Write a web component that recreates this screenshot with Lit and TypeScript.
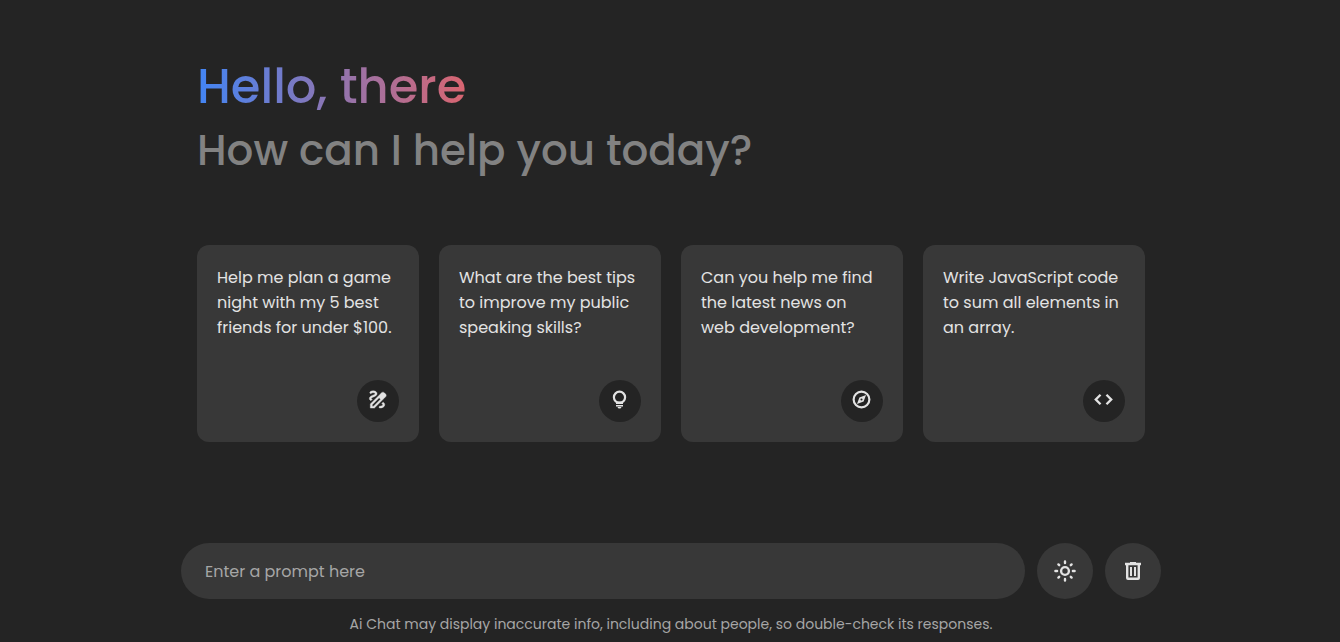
import { LitElement, html, css, svg } from "lit";
import { customElement } from "lit/decorators.js";

const icons = {
  draw: svg`<path transform="translate(-.6 -1.3) scale(1.1)" fill="currentColor" stroke="currentColor" stroke-width=".4" fill-rule="evenodd" d="M18.85 10.39l1.06-1.06c.78-.78.78-2.05 0-2.83L18.5 5.09c-.78-.78-2.05-.78-2.83 0l-2.48 2.470L4 16.76V21h4.24zM13.2 10.4L6 17.6V19h1.4l7.2-7.2zM19 17.5c0 2.19-2.54 3.5-5 3.5-.55 0-1-.45-1-1s.45-1 1-1c1.54 0 3-.73 3-1.5 0-.47-.48-.87-1.23-1.2l1.48-1.48c1.07.63 1.75 1.47 1.75 2.68zM4.58 13.35C3.61 12.79 3 12.06 3 11c0-1.8 1.89-2.63 3.56-3.36C7.59 7.18 9 6.56 9 6c0-.41-.78-1-2-1-1.26 0-1.8.61-1.83.64-.35.41-.98.46-1.4.12-.41-.34-.49-.95-.15-1.38C3.73 4.24 4.76 3 7 3s4 1.32 4 3c0 1.87-1.93 2.72-3.64 3.47C6.42 9.88 5 10.5 5 11c0 .31.43.6 1.07.86l-1.49 1.49z"/>`,
  bulb: svg`<circle cx="12" cy="9.5" r="6.4" fill="none" stroke="currentColor" stroke-width="2.5"/><path fill="currentColor" d="M8 14.4h8V17H8zM8 18.2h8v1.8H8zM9.8 20.6h4.4a2.2 1.8 0 0 1-4.4 0z"/>`,
  compass: svg`<circle cx="12" cy="12" r="9" fill="none" stroke="currentColor" stroke-width="2.5"/><path fill="currentColor" fill-rule="evenodd" d="M6.8 17.2l2.8-7.6 7.6-2.8-2.8 7.6zM12 10.8a1.2 1.2 0 1 0 0 2.4 1.2 1.2 0 0 0 0-2.4z"/>`,
  code: svg`<path fill="none" stroke="currentColor" stroke-width="2.7" d="M8.6 6.6L3.2 12l5.4 5.4M15.4 6.6l5.4 5.4-5.4 5.4"/>`,
  sun: svg`<g fill="none" stroke="currentColor" stroke-width="2.4" stroke-linecap="round"><circle cx="12" cy="12" r="3.9"/><path d="M12 2.4v1.7M12 19.9v1.7M2.4 12h1.7M19.9 12h1.7M5.4 5.4l.8.8M17.8 17.8l.8.8M5.4 18.6l.8-.8M17.8 6.2l.8-.8"/></g>`,
  trash: svg`<path fill="currentColor" fill-rule="evenodd" d="M4 3.8h5V3h6v.8h5v2.4h-1V19q0 2-2 2H7q-2 0-2-2V6.2H4zM7.4 6.2v12.4h9.2V6.2zM9 8h2v9H9zM13 8h2v9h-2z"/>`,
};

const icon = (name: keyof typeof icons, size: string) =>
  html`<svg class=${size} viewBox="0 0 24 24" aria-hidden="true">${icons[name]}</svg>`;

const suggestions: { text: string; icon: keyof typeof icons }[] = [
  { text: "Help me plan a game night with my 5 best friends for under $100.", icon: "draw" },
  { text: "What are the best tips to improve my public speaking skills?", icon: "bulb" },
  { text: "Can you help me find the latest news on web development?", icon: "compass" },
  { text: "Write JavaScript code to sum all elements in an array.", icon: "code" },
];

@customElement("app-root")
export class AppRoot extends LitElement {
  static styles = css`
    :host {
      display: flex;
      flex-direction: column;
      justify-content: space-between;
      box-sizing: border-box;
      min-height: 100vh;
      padding-left: 2px;
      background: #242424;
      color: #e3e3e3;
      font-family: Poppins, Inter, sans-serif;
    }
    * { box-sizing: border-box; }
    .header, .typing {
      width: 100%;
      max-width: 980px;
      margin: 0 auto;
    }
    .header { padding: 51px 16px 0; }
    .title, .subtitle { margin: 0; font-weight: 500; }
    .title {
      width: fit-content;
      font-size: 48px;
      line-height: 72px;
      background: linear-gradient(to right, #4285f4, #d96570);
      background-clip: text;
      -webkit-background-clip: text;
      color: transparent;
    }
    .subtitle { font-size: 42px; line-height: 56px; color: #828282; }
    .suggestions {
      display: grid;
      grid-template-columns: repeat(4, 1fr);
      gap: 20px;
      margin: 66px 0 0;
      padding: 0;
      list-style: none;
    }
    .card {
      display: flex;
      flex-direction: column;
      align-items: flex-end;
      justify-content: space-between;
      width: 100%;
      height: 100%;
      min-height: 197px;
      padding: 20px;
      border: 0;
      border-radius: 12px;
      background: #383838;
      color: inherit;
      font: inherit;
      text-align: left;
      cursor: pointer;
    }
    .text { width: 100%; font-size: 16px; line-height: 25px; }
    .badge {
      display: flex;
      align-items: center;
      justify-content: center;
      width: 42px;
      height: 42px;
      padding: 0 1px 3px 0;
      border-radius: 50%;
      background: #242424;
    }
    .small { width: 21px; height: 21px; }
    .large { width: 24px; height: 24px; }
    .form { display: flex; gap: 12px; }
    .input {
      flex: 1;
      min-width: 0;
      height: 56px;
      padding: 0 24px;
      border: 0;
      outline: 0;
      border-radius: 28px;
      background: #383838;
      color: inherit;
      font: inherit;
      font-size: 16px;
    }
    .input::placeholder { color: #a6a6a6; opacity: 1; }
    .action {
      display: flex;
      align-items: center;
      justify-content: center;
      width: 56px;
      height: 56px;
      padding: 0;
      border: 0;
      border-radius: 50%;
      background: #383838;
      color: inherit;
      cursor: pointer;
    }
    .note {
      margin: 14px 0 0;
      padding-bottom: 7px;
      font-size: 14px;
      line-height: 22px;
      text-align: center;
      color: #a6a6a6;
    }
    @media (max-width: 800px) {
      .suggestions { grid-template-columns: repeat(2, 1fr); }
    }
  `;

  render() {
    return html`
      <header class="header">
        <h1 class="title">Hello, there</h1>
        <p class="subtitle">How can I help you today?</p>
        <ul class="suggestions">
          ${suggestions.map(
            (s) => html`<li>
              <button class="card" type="button">
                <span class="text">${s.text}</span>
                <span class="badge">${icon(s.icon, "small")}</span>
              </button>
            </li>`
          )}
        </ul>
      </header>
      <footer class="typing">
        <form class="form" @submit=${(e: Event) => e.preventDefault()}>
          <input class="input" type="text" placeholder="Enter a prompt here" aria-label="Enter a prompt here" autocomplete="off" />
          <button class="action" type="button" aria-label="Toggle light mode">${icon("sun", "large")}</button>
          <button class="action" type="button" aria-label="Delete chat">${icon("trash", "large")}</button>
        </form>
        <p class="note">Ai Chat may display inaccurate info, including about people, so double-check its responses.</p>
      </footer>
    `;
  }
}
